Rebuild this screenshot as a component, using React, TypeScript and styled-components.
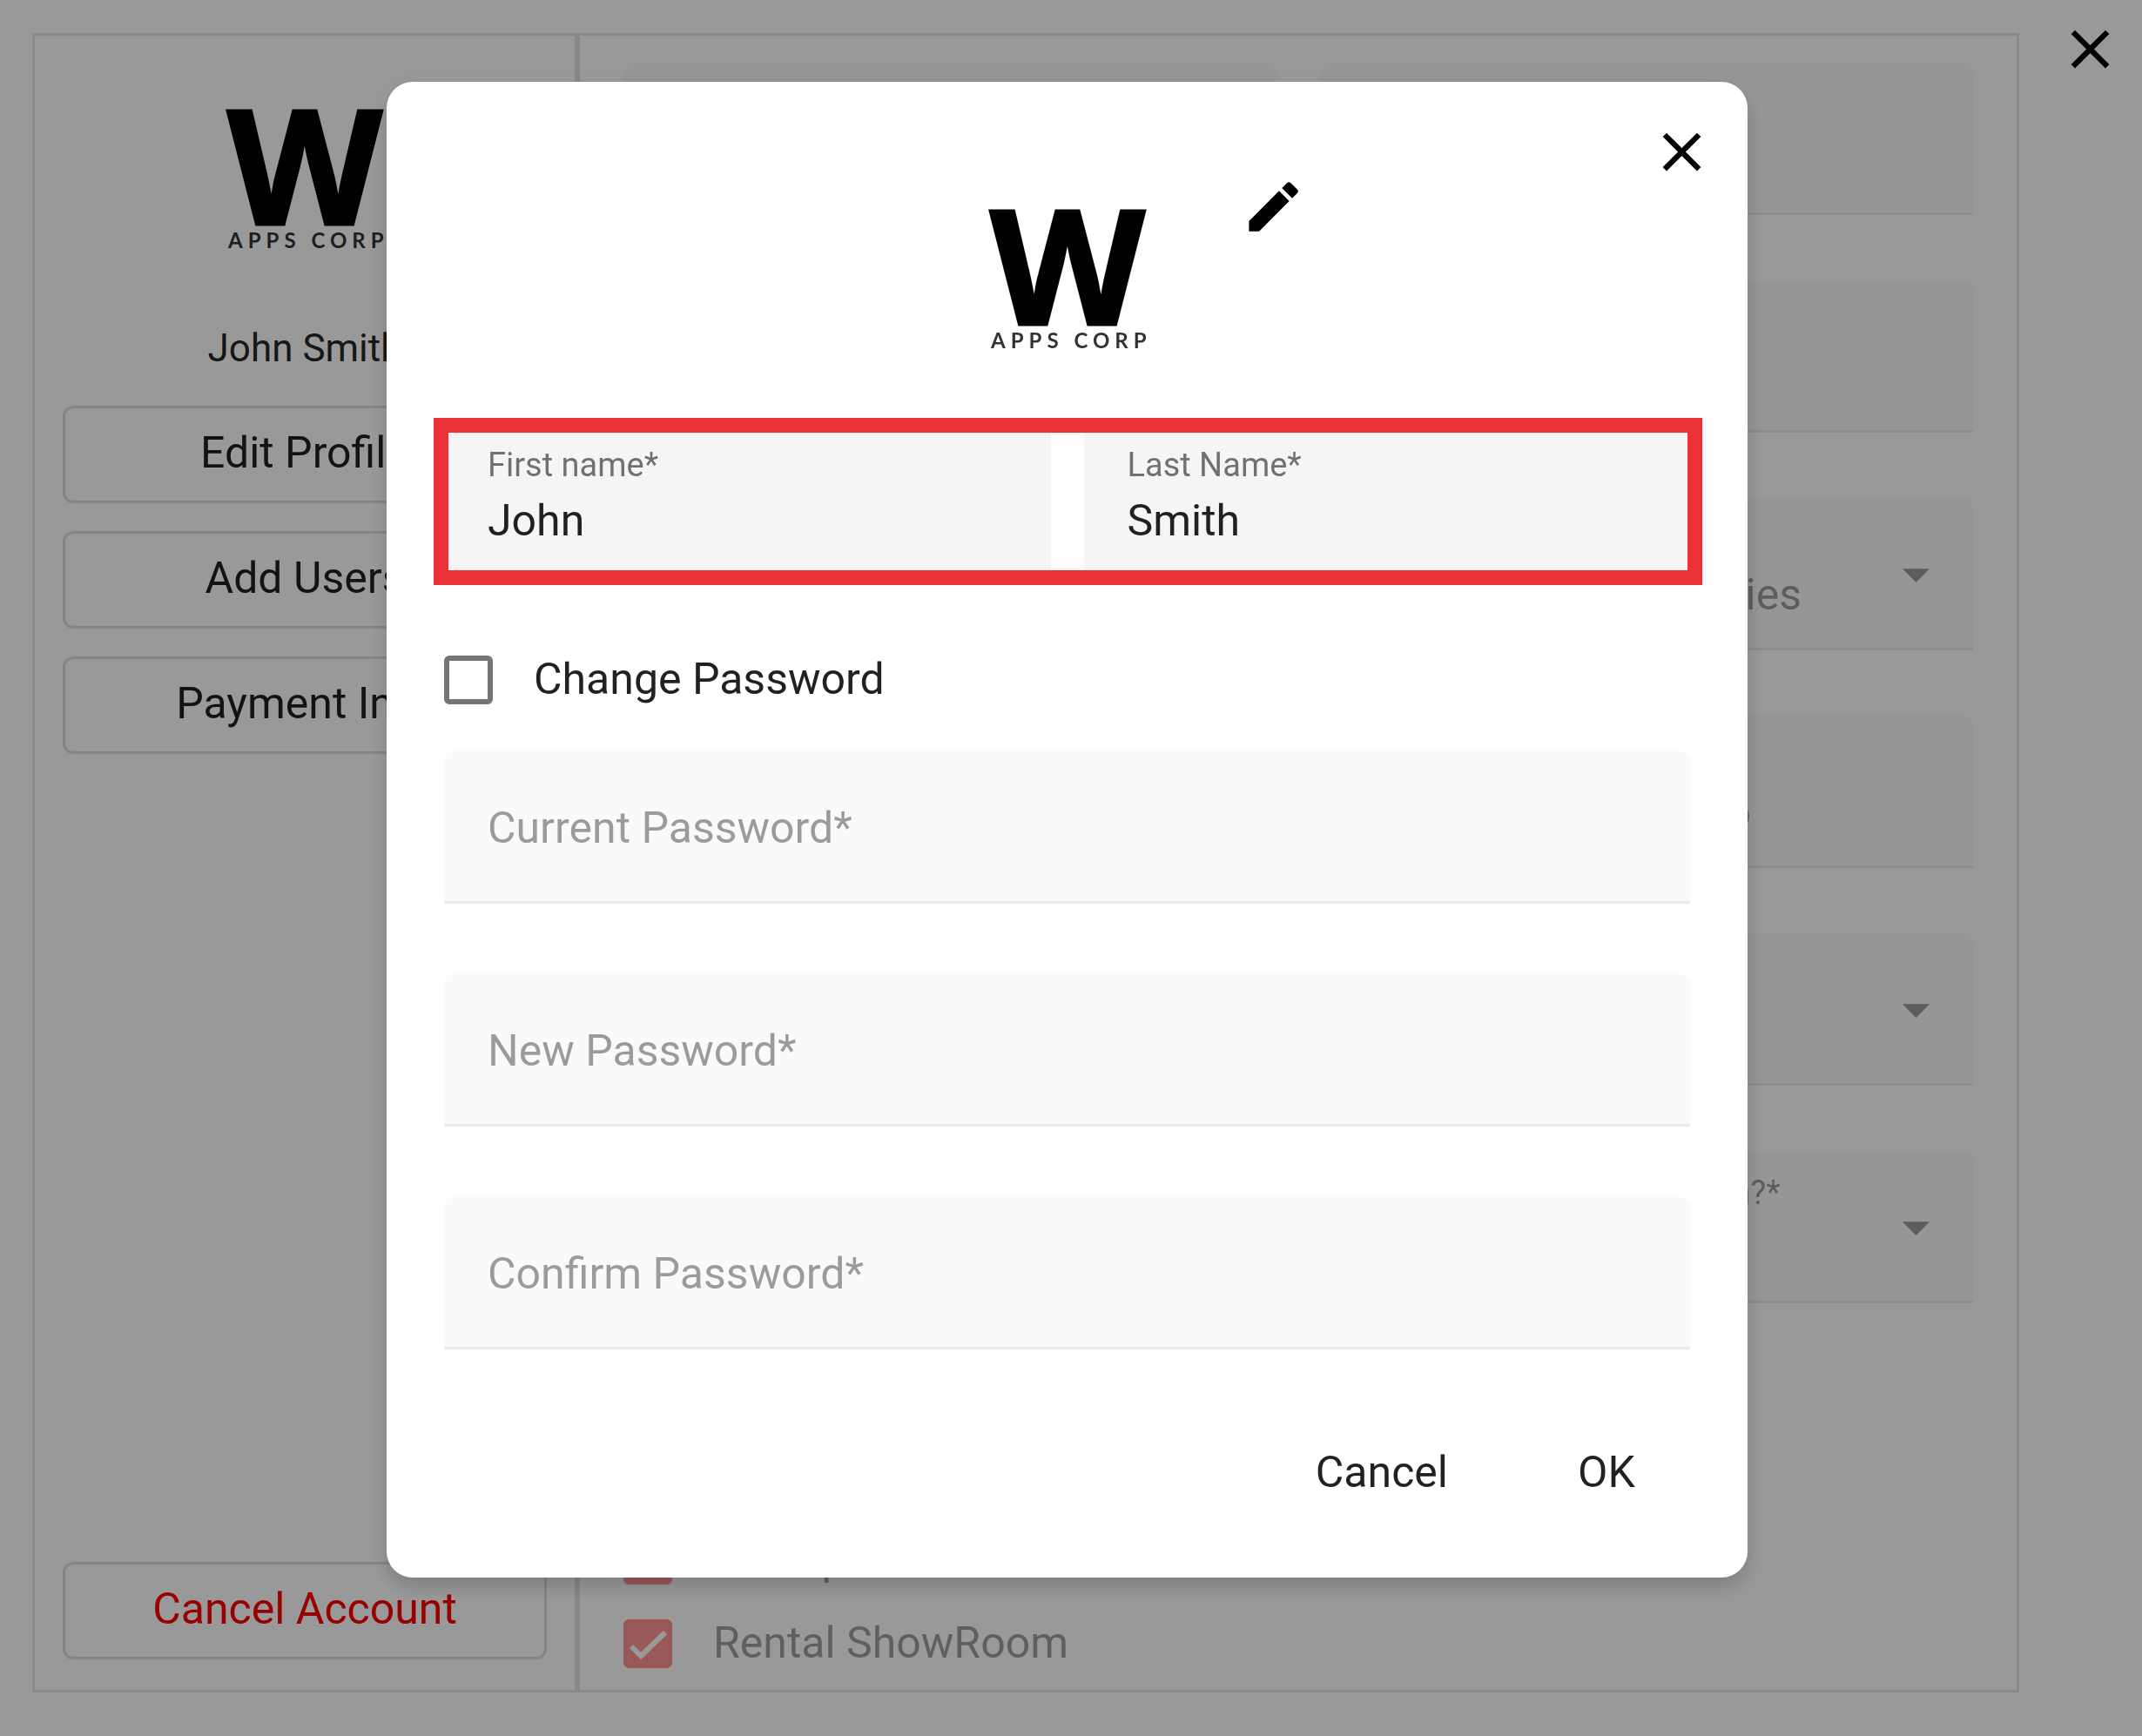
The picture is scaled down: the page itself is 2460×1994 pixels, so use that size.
import React, { useState } from "react";
import styled, { createGlobalStyle } from "styled-components";
import { MdArrowDropDown, MdClose, MdEdit } from "react-icons/md";

const GlobalStyle = createGlobalStyle`
  *, *::before, *::after { box-sizing: border-box; }
  body {
    margin: 0;
    background: #fff;
    color: rgba(0, 0, 0, 0.87);
    font-family: Roboto, "Liberation Sans", sans-serif;
    font-size: 50px;
    line-height: 58px;
  }
  button, input, select { font: inherit; color: inherit; }
`;

const Page = styled.div`
  display: flex;
  min-height: 100vh;
  padding: 38px 0 50px 37px;
`;

const Panel = styled.main`
  flex: 1;
  display: flex;
  border: 3px solid #e3e8e9;
`;

const Sidebar = styled.aside`
  display: flex;
  flex-direction: column;
  align-items: center;
  gap: 32px;
  width: 626px;
  padding: 82px 32px 35px;
  border-right: 6px solid #e0e3e6;
`;

const UserName = styled.p`
  margin: 54px 0 5px;
  font-size: 44px;
  line-height: 58px;
`;

const SideButton = styled.button<{ $danger?: boolean }>`
  width: 100%;
  height: 112px;
  padding: 0 0 4px;
  border: 3px solid #dedede;
  border-radius: 12px;
  background: transparent;
  color: ${(p) => (p.$danger ? "#f00" : "rgba(0, 0, 0, 0.87)")};
  margin-top: ${(p) => (p.$danger ? "auto" : "0")};
`;

const Content = styled.section`
  flex: 1;
  display: flex;
  flex-direction: column;
  justify-content: space-between;
  padding: 31px 50px 25px;
`;

const FieldGrid = styled.div`
  display: grid;
  grid-template-columns: 1fr 1fr;
  gap: 75px 50px;
`;

const CheckList = styled.div`
  display: flex;
  flex-direction: column;
  gap: 40px;
`;

const CloseColumn = styled.div`
  display: flex;
  justify-content: center;
  align-items: flex-start;
  width: 141px;
  padding-left: 21px;
`;

const IconButton = styled.button`
  display: flex;
  flex: none;
  width: 75px;
  height: 75px;
  padding: 0;
  border: 0;
  background: transparent;
  color: #000;
  svg { width: 100%; height: 100%; }
`;

const PageClose = styled(IconButton)`
  margin-top: -19px;
`;

const FieldBox = styled.div<{ $disabled?: boolean }>`
  position: relative;
  height: 175px;
  border-bottom: 3px solid ${(p) => (p.$disabled ? "#ebebeb" : "#8f8f8f")};
  border-radius: 12px 12px 0 0;
  background: ${(p) => (p.$disabled ? "#fafafa" : "#f5f5f5")};
  color: ${(p) => (p.$disabled ? "rgba(0, 0, 0, 0.38)" : "rgba(0, 0, 0, 0.87)")};
  svg {
    position: absolute;
    top: 50px;
    right: 28px;
    width: 75px;
    height: 75px;
    pointer-events: none;
  }
`;

const FieldLabel = styled.label<{ $floating: boolean; $disabled?: boolean }>`
  position: absolute;
  left: 50px;
  top: ${(p) => (p.$floating ? "26px" : "59px")};
  font-size: ${(p) => (p.$floating ? "38px" : "50px")};
  line-height: ${(p) => (p.$floating ? "44px" : "58px")};
  color: ${(p) => (p.$disabled ? "rgba(0, 0, 0, 0.38)" : "rgba(0, 0, 0, 0.54)")};
  white-space: nowrap;
  pointer-events: none;
`;

const FieldInput = styled.input`
  display: block;
  width: 100%;
  height: 100%;
  padding: 83px 50px 31px;
  border: 0;
  outline: 0;
  background: transparent;
`;

const FieldSelect = styled.select`
  appearance: none;
  display: block;
  width: 100%;
  height: 100%;
  padding: 82px 50px 32px;
  border: 0;
  outline: 0;
  background: transparent;
  opacity: 1;
`;

const CheckRow = styled.label<{ $disabled?: boolean }>`
  display: flex;
  align-items: center;
  gap: 47px;
  height: 56px;
  color: ${(p) => (p.$disabled ? "rgba(0, 0, 0, 0.38)" : "rgba(0, 0, 0, 0.87)")};
`;

const CheckText = styled.span`
  padding-bottom: 3px;
`;

const CheckMark = styled.span`
  position: relative;
  display: flex;
  width: 56px;
  height: 56px;
  svg {
    position: absolute;
    inset: 0;
    pointer-events: none;
  }
`;

const CheckInput = styled.input`
  appearance: none;
  width: 56px;
  height: 56px;
  margin: 0;
  border: 6px solid #757575;
  border-radius: 6px;
  &:checked {
    border-color: #ff9494;
    background: #ff9494;
  }
`;

const Backdrop = styled.div`
  position: fixed;
  inset: 0;
  display: flex;
  justify-content: center;
  align-items: flex-start;
  padding: 94px 9px 0 0;
  background: rgba(0, 0, 0, 0.4);
`;

const Dialog = styled.form`
  position: relative;
  width: 100%;
  max-width: 1563px;
  padding: 106px 66px 65px;
  border-radius: 30px;
  background: #fff;
  box-shadow: 0 12px 20px rgba(0, 0, 0, 0.14), 0 4px 32px rgba(0, 0, 0, 0.06);
`;

const DialogClose = styled(IconButton)`
  position: absolute;
  top: 43px;
  right: 38px;
`;

const DialogHeader = styled.header`
  display: grid;
  grid-template-columns: 1fr auto 1fr;
  column-gap: 110px;
  align-items: start;
  margin-bottom: 86px;
`;

const LogoSlot = styled.div`
  grid-column: 2;
  padding-top: 38px;
`;

const LogoSvg = styled.svg`
  display: block;
  overflow: visible;
`;

const NameRow = styled.div`
  position: relative;
  display: grid;
  grid-template-columns: 1fr 1fr;
  gap: 38px;
  margin-bottom: 92px;
  &::after {
    content: "";
    position: absolute;
    inset: -6px -14px -11px -12px;
    border: 17px solid #ed3237;
    pointer-events: none;
  }
`;

const PasswordFields = styled.div`
  display: flex;
  flex-direction: column;
  gap: 81px;
  margin: 54px 0 85px;
`;

const Actions = styled.footer`
  display: flex;
  justify-content: flex-end;
  gap: 36px;
`;

const ActionButton = styled.button`
  min-width: 192px;
  height: 112px;
  padding: 0 50px;
  border: 0;
  background: transparent;
`;

function Logo() {
  return (
    <LogoSvg width="178" height="162" viewBox="0 0 178 162" role="img" aria-label="W Apps Corp">
      <text
        x="89"
        y="135"
        textAnchor="middle"
        fontFamily="Open Sans"
        fontWeight="700"
        fontSize="184"
        fill="#000"
        stroke="#000"
        strokeWidth="3"
      >
        W
      </text>
      <text x="1" y="162" fontFamily="Lato" fontWeight="700" fontSize="24" letterSpacing="6" fill="#333">
        APPS CORP
      </text>
    </LogoSvg>
  );
}

type FieldProps = {
  id: string;
  label?: string;
  value?: string;
  type?: string;
  disabled?: boolean;
};

function TextField({ id, label, value = "", type = "text", disabled }: FieldProps) {
  const [text, setText] = useState(value);
  return (
    <FieldBox $disabled={disabled}>
      <FieldInput
        id={id}
        type={type}
        value={text}
        disabled={disabled}
        aria-label={label ? undefined : id}
        onChange={(e) => setText(e.target.value)}
      />
      {label && (
        <FieldLabel htmlFor={id} $floating={text !== ""} $disabled={disabled}>
          {label}
        </FieldLabel>
      )}
    </FieldBox>
  );
}

function SelectField({ id, label, value = "" }: FieldProps) {
  return (
    <FieldBox $disabled>
      <FieldSelect id={id} disabled defaultValue={value} aria-label={label ? undefined : id}>
        <option value={value}>{value}</option>
      </FieldSelect>
      {label && (
        <FieldLabel htmlFor={id} $floating $disabled>
          {label}
        </FieldLabel>
      )}
      <MdArrowDropDown />
    </FieldBox>
  );
}

function Check({ label, checked = false, disabled }: { label: string; checked?: boolean; disabled?: boolean }) {
  const [on, setOn] = useState(checked);
  return (
    <CheckRow $disabled={disabled}>
      <CheckMark>
        <CheckInput type="checkbox" checked={on} disabled={disabled} onChange={(e) => setOn(e.target.checked)} />
        {on && (
          <svg viewBox="0 0 56 56" fill="none" stroke="#fff" strokeWidth="6">
            <path d="M9 31 L20 42 L48 15" />
          </svg>
        )}
      </CheckMark>
      <CheckText>{label}</CheckText>
    </CheckRow>
  );
}

export default function App() {
  return (
    <>
      <GlobalStyle />
      <Page>
        <Panel>
          <Sidebar>
            <Logo />
            <UserName>John Smith</UserName>
            <SideButton>Edit Profile</SideButton>
            <SideButton>Add Users</SideButton>
            <SideButton>Payment Info</SideButton>
            <SideButton $danger>Cancel Account</SideButton>
          </Sidebar>
          <Content>
            <FieldGrid>
              <TextField id="company" disabled />
              <TextField id="phone" disabled />
              <TextField id="street" disabled />
              <TextField id="suite" disabled />
              <TextField id="city" disabled />
              <SelectField id="category" value="Recreation Companies" />
              <TextField id="zip" disabled />
              <TextField id="location" value="Hotel San Francisco" disabled />
              <TextField id="website" disabled />
              <SelectField id="country" />
              <TextField id="hours" disabled />
              <SelectField id="showroom" label="Will you open a showroom?*" />
            </FieldGrid>
            <CheckList>
              <Check label="Transport" checked disabled />
              <Check label="Rental ShowRoom" checked disabled />
            </CheckList>
          </Content>
        </Panel>
        <CloseColumn>
          <PageClose aria-label="Close page">
            <MdClose />
          </PageClose>
        </CloseColumn>
      </Page>
      <Backdrop>
        <Dialog role="dialog" aria-label="Edit Profile" onSubmit={(e) => e.preventDefault()}>
          <DialogClose type="button" aria-label="Close">
            <MdClose />
          </DialogClose>
          <DialogHeader>
            <LogoSlot>
              <Logo />
            </LogoSlot>
            <IconButton type="button" aria-label="Edit logo">
              <MdEdit />
            </IconButton>
          </DialogHeader>
          <NameRow>
            <TextField id="first-name" label="First name*" value="John" />
            <TextField id="last-name" label="Last Name*" value="Smith" />
          </NameRow>
          <Check label="Change Password" />
          <PasswordFields>
            <TextField id="current-password" label="Current Password*" type="password" disabled />
            <TextField id="new-password" label="New Password*" type="password" disabled />
            <TextField id="confirm-password" label="Confirm Password*" type="password" disabled />
          </PasswordFields>
          <Actions>
            <ActionButton type="button">Cancel</ActionButton>
            <ActionButton type="submit">OK</ActionButton>
          </Actions>
        </Dialog>
      </Backdrop>
    </>
  );
}
